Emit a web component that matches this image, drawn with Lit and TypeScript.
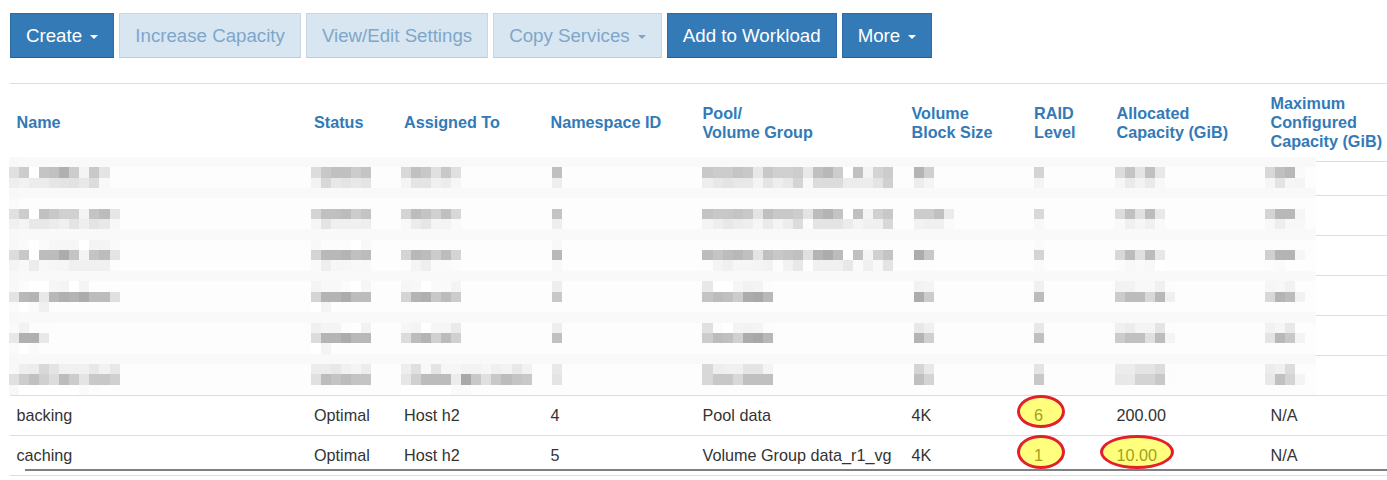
import { LitElement, html, css, svg } from "lit";
import { customElement } from "lit/decorators.js";

// Pixelated (redacted) cells: [first column, { row: grey levels as hex }]
const BLOCKS: [number, Record<number, string>][] = [
  [0, {
    1: "e0 cc ff c4 c0 b0 cc f4 c8 e4", 2: "ee f2 ec ec e6 e4 e2 e8 dc f8",
    5: "e0 cc ff c0 c8 d0 d0 f4 c4 bc e6", 6: "f0 f4 e8 e8 ec f0 e4 ee e4 e8 f8",
    8: "f8 fa ff fa f6 f6 f6 ff f4 f4 fa",
    9: "dc c8 ff bc bc ac c4 f4 c4 bc e4", 10: "f4 f8 ec f8 f6 f6 f0 f0 f0 f0 fc",
    12: "f8 fc ff ff f6 f4 ff f4",
    13: "e4 b8 b4 e8 b8 b0 b4 ac bc bc e0", 14: "fa ff fa f0",
    16: "fa f2 fc fc", 17: "e8 b0 b0 e8", 18: "fa ff fa",
    20: "f8 ee ec d8 e4 f0 f0 f0 e8 f2 e8", 21: "e0 cc c0 d0 dc bc cc e4 c8 c8 d0", 22: "f8 ff ff ff ff ff ff fa fc",
  }],
  [30, {
    1: "dc c8 c0 c0 cc c4", 2: "f2 d8 e8 e4 e8 e4",
    5: "d4 c0 c0 bc cc c4", 6: "f6 e4 f0 f0 f0 ee", 8: "f8 fc fc fc ff f8",
    9: "d4 b8 b8 b4 c0 bc", 10: "fa ee f6 f6 f8 f8", 12: "f4 f8 f8 fc ff f6",
    13: "d4 b4 b4 ac bc bc", 14: "ff f4", 16: "f0 f4 f4 fc fe f2",
    17: "dc b4 b4 ac b8 b8", 18: "ff f4", 20: "ec ec e8 f0 f4 ec", 21: "e0 bc c4 bc c4 c4",
  }],
  [39, {
    1: "d8 c0 c8 e0 c8 e0", 2: "f4 e4 e4 f0 ec f6",
    5: "d4 bc c4 d0 c0 d8", 6: "f8 ec e6 f4 f4 fa",
    9: "d4 b8 bc cc bc d4", 10: "fc f4 ee fa fa fc", 12: "f6 f8 ff fa fa f4",
    13: "d4 b4 b0 c8 bc cc", 16: "f6 f4 ff f6 f6 ea", 17: "dc bc b4 d0 bc d0",
    20: "ee e0 f8 e4 f6 f6 f2 f2 f6 f0 f2 e8 f2",
    21: "e6 d0 bc bc bc ec a8 c8 e0 c8 bc c4 c8", 22: "ff ff ff ff ff fa fa",
  }],
  [54, {
    1: "c0", 2: "ee", 5: "c4", 6: "ee", 8: "f8", 9: "b8", 10: "f8",
    12: "ee", 13: "c8", 16: "ee", 17: "c0", 20: "e8", 21: "e4",
  }],
  [69, {
    1: "c8 cc cc c4 c8 e8 c8 d0 d0 cc e8 c0 b8 cc ff c0 f4 d4 cc",
    2: "ee e8 e4 e8 e8 f4 e4 ee e8 d4 f8 dc dc dc ec ec ec e4 d0",
    5: "c4 c8 c8 c4 c8 e4 c0 c8 c8 cc e4 bc b4 c4 ff c0 f4 d0 c8",
    6: "f4 ee e8 ec ee f6 ea f4 ec dc fc e4 e4 e4 ec f4 f0 f0 d8",
    9: "bc c4 bc b8 c0 e4 c0 c8 c4 c0 e0 b4 ac bc ff c0 f4 d0 c4",
    10: "fc f4 f0 f6 f6 f4 f2 fc f2 e8 fe f0 f0 f0 e8 fa f0 f8 e4",
    12: "e8 ff ff f6 f2 f4 fc", 13: "c4 bc c0 cc ac a8 b8",
    16: "e0 fc ff f4 f2 f4 fc", 17: "cc bc c0 d0 ac a8 b8",
    20: "d8 ee f0 f0 e4 e4 f4", 21: "d8 c8 c8 d8 c0 c0 c0",
  }],
  [90, {
    1: "b4 d0", 2: "ec f4", 5: "cc cc c0 ec", 6: "f2 f0 f0 fa", 9: "ac c8", 10: "fc fc",
    12: "f2 f4", 13: "ac cc", 16: "e8 f0", 17: "b4 d0", 20: "d4 e8", 21: "c0 d4",
  }],
  [102, {
    1: "d4", 2: "f4", 5: "d8", 6: "f8", 8: "fa", 9: "d4", 10: "fa",
    12: "f0", 13: "bc", 16: "e8", 17: "c0", 20: "e4", 21: "c8",
  }],
  [110, {
    1: "dc c4 e4 c0 e8", 2: "f6 ea f2 ea f8", 5: "dc c0 e0 bc e8", 6: "fa f0 f6 f0 fa",
    9: "d8 bc e0 bc e8", 10: "fc f8 fa f8 ff", 12: "f2 f2 f8 f8 f0 fc",
    13: "cc bc bc d8 b8 f0", 16: "f0 ec f4 f4 e4 fc", 17: "cc c0 c0 e0 bc f4",
    20: "ec ec e4 e4 dc fc", 21: "e8 e8 d4 d4 c8 fc",
  }],
  [125, {
    1: "d8 c0 b8 fa", 2: "f6 e4 f6 f4", 5: "d4 b8 b8 f6", 6: "f8 ee f8 f8",
    9: "d0 b4 b4 f6", 10: "fc fa fe fe", 12: "f6 f8 f2", 13: "d8 b4 bc f2",
    16: "f2 f6 e8", 17: "e4 b8 c8 f4", 20: "ec f0 dc", 21: "e8 c0 d4 f4",
  }],
];

const CW = 10.05;
const RH = 238 / 23;
const BANDS = [0, 3, 7, 11, 15, 19];

@customElement("mosaic-overlay")
class MosaicOverlay extends LitElement {
  static styles = css`
    :host { display: block; line-height: 0; }
    svg { display: block; }
  `;
  render() {
    const rects = [];
    for (const r of BANDS) {
      rects.push(svg`<rect x="0" y=${r * RH} width="1306.5" height=${RH} fill="#f9f9f9"></rect>`);
    }
    rects.push(svg`<rect x="0" y="0" width=${CW} height="238" fill="#f8f8f8" opacity="0.7"></rect>`);
    for (const [col, rows] of BLOCKS) {
      for (const key of Object.keys(rows)) {
        const r = Number(key);
        rows[r].split(" ").forEach((g, i) => {
          rects.push(svg`<rect x=${(col + i) * CW} y=${r * RH} width=${CW} height=${RH} fill=${"#" + g + g + g}></rect>`);
        });
      }
    }
    return html`<svg width="1306.5" height="238" viewBox="0 0 1306.5 238" shape-rendering="crispEdges">
      <rect width="1306.5" height="238" fill="#fdfdfd"></rect>
      ${rects}
    </svg>`;
  }
}

const BUTTONS = [
  { label: "Create", caret: true, disabled: false },
  { label: "Increase Capacity", caret: false, disabled: true },
  { label: "View/Edit Settings", caret: false, disabled: true },
  { label: "Copy Services", caret: true, disabled: true },
  { label: "Add to Workload", caret: false, disabled: false },
  { label: "More", caret: true, disabled: false },
];

const COLS = [297.5, 90, 146.5, 152, 209, 122.5, 82.5, 154, 123];

@customElement("app-root")
export class AppRoot extends LitElement {
  static styles = css`
    :host {
      display: block;
      height: 480px;
      overflow: hidden;
      background: #fff;
      font-family: "Liberation Sans", Arial, sans-serif;
      color: #333;
    }
    .toolbar { display: flex; gap: 5px; padding: 13px 0 0 10px; }
    .btn {
      box-sizing: border-box;
      height: 45px;
      padding: 0 15px;
      border: 1px solid #2e6da4;
      border-bottom-color: #28608f;
      border-radius: 0;
      background: #337ab7;
      color: #fff;
      font: 18.7px/43px "Liberation Sans", Arial, sans-serif;
      white-space: nowrap;
    }
    .btn.disabled {
      background: #d7e6f1;
      border-color: #c6d6e5;
      border-bottom-color: #b9cbde;
      color: #7fa6ca;
    }
    .caret {
      display: inline-block;
      width: 0;
      height: 0;
      margin-left: 3px;
      vertical-align: middle;
      border-top: 4px solid currentColor;
      border-left: 4px solid transparent;
      border-right: 4px solid transparent;
    }
    .wrap { position: relative; margin: 25px 0 0 10px; }
    table {
      width: 1377px;
      table-layout: fixed;
      border-collapse: collapse;
      border-top: 1px solid #ddd;
      font-size: 16.2px;
      line-height: 19px;
    }
    th {
      height: 78px;
      padding: 0 0 0 6.5px;
      box-sizing: border-box;
      text-align: left;
      vertical-align: middle;
      font-weight: bold;
      color: #337ab7;
      white-space: nowrap;
    }
    td {
      height: 40px;
      padding: 0 0 0 6.5px;
      box-sizing: border-box;
      border-top: 1px solid #ddd;
      vertical-align: middle;
      white-space: nowrap;
    }
    tr.first td { height: 34px; }
    tbody { border-bottom: 1px solid #ddd; }
    .mosaic { position: absolute; left: -1px; top: 74px; }
    .strike {
      position: absolute;
      left: 15px;
      right: 0;
      top: 386px;
      height: 2px;
      background: #808080;
    }
    .mark { position: relative; z-index: 1; color: #9f9f22; display: inline-block; }
    .mark::before {
      content: "";
      position: absolute;
      z-index: -1;
      box-sizing: border-box;
      top: -11px;
      bottom: -4px;
      left: -17px;
      right: -22px;
      background: #ffff7d;
      border: 3px solid #e21f2d;
      border-radius: 50%;
    }
    .mark.up::before { bottom: -3px; }
    .mark.wide::before { left: -16.5px; right: -16.5px; }
  `;

  render() {
    return html`
      <div class="toolbar">
        ${BUTTONS.map(
          (b) => html`<div class="btn ${b.disabled ? "disabled" : ""}">${b.label}${b.caret
            ? html` <span class="caret"></span>`
            : ""}</div>`
        )}
      </div>
      <div class="wrap">
        <table>
          <colgroup>${COLS.map((w) => html`<col style="width:${w}px" />`)}</colgroup>
          <thead>
            <tr>
              <th>Name</th>
              <th>Status</th>
              <th>Assigned To</th>
              <th>Namespace ID</th>
              <th>Pool/<br />Volume Group</th>
              <th>Volume<br />Block Size</th>
              <th>RAID<br />Level</th>
              <th>Allocated<br />Capacity (GiB)</th>
              <th>Maximum<br />Configured<br />Capacity (GiB)</th>
            </tr>
          </thead>
          <tbody>
            ${[0, 1, 2, 3, 4, 5].map(
              (i) => html`<tr class=${i === 0 ? "first" : ""}>
                ${COLS.map(() => html`<td></td>`)}
              </tr>`
            )}
            <tr>
              <td>backing</td><td>Optimal</td><td>Host h2</td><td>4</td><td>Pool data</td><td>4K</td>
              <td><span class="mark up">6</span></td><td>200.00</td><td>N/A</td>
            </tr>
            <tr>
              <td>caching</td><td>Optimal</td><td>Host h2</td><td>5</td><td>Volume Group data_r1_vg</td><td>4K</td>
              <td><span class="mark">1</span></td><td><span class="mark wide">10.00</span></td><td>N/A</td>
            </tr>
          </tbody>
        </table>
        <mosaic-overlay class="mosaic"></mosaic-overlay>
        <div class="strike"></div>
      </div>
    `;
  }
}
